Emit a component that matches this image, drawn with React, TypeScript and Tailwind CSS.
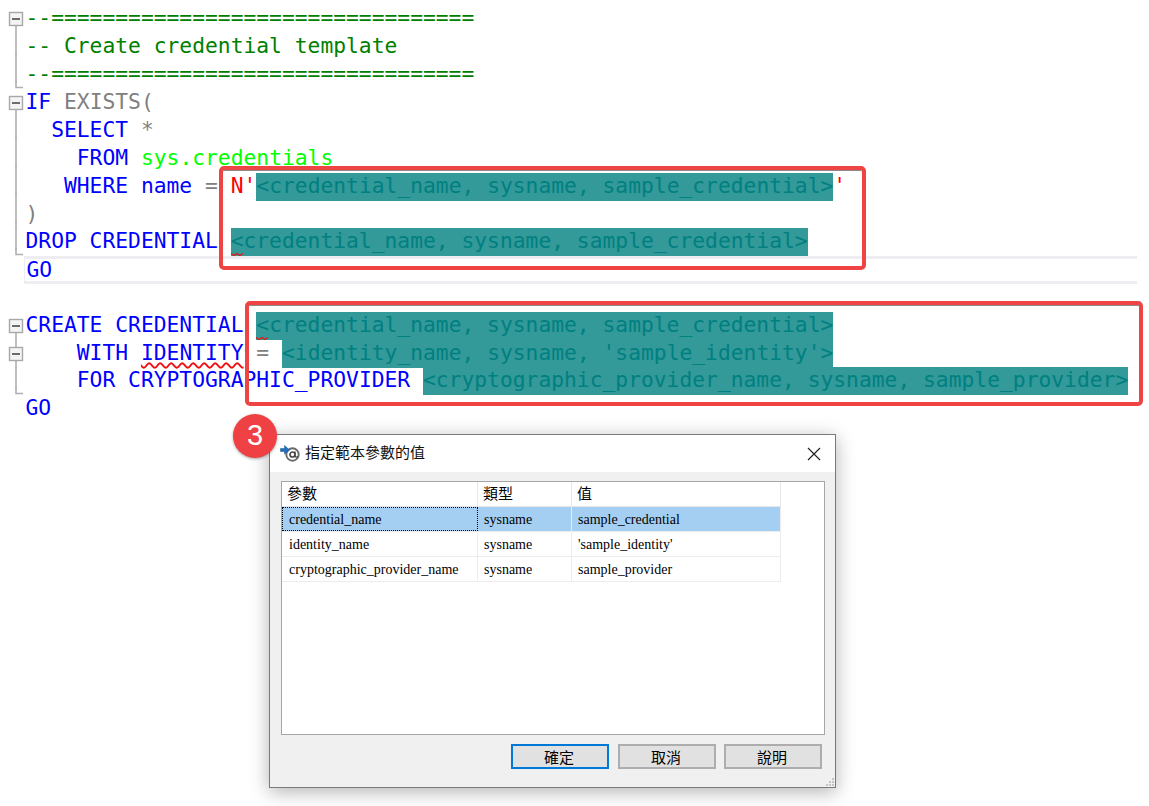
const mono = 'font-["DejaVu_Sans_Mono",monospace]';
const cjk = 'font-["Noto_Sans_CJK_TC",sans-serif]';

type Fold = 'open' | 'nested' | 'line' | 'end' | 'none';

// Gutter with the outlining marks of the editor
function Gutter({ fold }: { fold: Fold }) {
  return (
    <svg width="24" height="28" className="shrink-0 overflow-visible">
      {(fold === 'line' || fold === 'end') && <path d="M16 0V22" stroke="#b0b0b0" strokeWidth="1.6" fill="none" />}
      {fold === 'line' && <path d="M16 20V28" stroke="#b0b0b0" strokeWidth="1.6" fill="none" />}
      {fold === 'end' && <path d="M16 20V26.5H23" stroke="#b0b0b0" strokeWidth="1.6" fill="none" />}
      {fold === 'nested' && <path d="M16 0V7" stroke="#b0b0b0" strokeWidth="1.6" fill="none" />}
      {(fold === 'open' || fold === 'nested') && (
        <>
          <path d="M16 20V28" stroke="#b0b0b0" strokeWidth="1.6" fill="none" />
          <rect x="9.5" y="7.5" width="13" height="13" fill="#f4f4f4" stroke="#a8a8a8" strokeWidth="1.4" />
          <path d="M12 14H20" stroke="#333" strokeWidth="1.4" />
        </>
      )}
    </svg>
  );
}

function Line({ fold, children, current, short }: { fold: Fold; children?: React.ReactNode; current?: boolean; short?: boolean }) {
  return (
    <div className={short ? 'flex h-[27px]' : 'flex h-[28px]'}>
      <Gutter fold={fold} />
      <div
        className={
          current
            ? 'flex-1 pl-[1.5px] border-l-[1px] border-y-[3px] border-[#eeeef2] leading-[21px] whitespace-pre'
            : 'flex-1 pl-[1.5px] leading-[26px] whitespace-pre'
        }
      >
        {children}
      </div>
    </div>
  );
}

const Kw = ({ children }: { children: React.ReactNode }) => <span className="text-[#0000ff]">{children}</span>;
const Gray = ({ children }: { children: React.ReactNode }) => <span className="text-[#808080]">{children}</span>;
const Param = ({ children }: { children: React.ReactNode }) => (
  <span className="inline-block h-[28px] bg-[#339999] text-[#008080] align-top">{children}</span>
);

function Squiggle() {
  return (
    <svg width="12" height="5" className="absolute left-0 bottom-[-1px]">
      <path d="M0 1.5L3 3.5L6 1.5L9 3.5L12 1.5" stroke="#f01010" strokeWidth="1.4" fill="none" />
    </svg>
  );
}

function Editor() {
  return (
    <div className={`${mono} text-[21.3px] pt-[5px] pr-[12px]`}>
      <Line fold="open"><span className="text-[#008000]">--=================================</span></Line>
      <Line fold="line"><span className="text-[#008000]">-- Create credential template</span></Line>
      <Line fold="end"><span className="text-[#008000]">--=================================</span></Line>
      <Line fold="open"><Kw>IF</Kw> <Gray>EXISTS(</Gray></Line>
      <Line fold="line">  <Kw>SELECT</Kw> <Gray>*</Gray></Line>
      <Line fold="line">    <Kw>FROM</Kw> <span className="text-[#00ff00]">sys.credentials</span></Line>
      <Line fold="line">   <Kw>WHERE</Kw> <Kw>name</Kw> <Gray>=</Gray> <span className="text-[#ff0000]">N'</span><Param>{'<credential_name, sysname, sample_credential>'}</Param><span className="text-[#ff0000]">'</span></Line>
      <Line fold="line" short><Gray>)</Gray></Line>
      <Line fold="end"><Kw>DROP CREDENTIAL</Kw> <span className="relative inline-block align-top"><Param>{'<credential_name, sysname, sample_credential>'}</Param><Squiggle /></span></Line>
      <Line fold="none" current><Kw>GO</Kw></Line>
      <Line fold="none" />
      <Line fold="open"><Kw>CREATE CREDENTIAL</Kw> <span className="relative inline-block align-top"><Param>{'<credential_name, sysname, sample_credential>'}</Param><Squiggle /></span></Line>
      <Line fold="nested" short>    <Kw>WITH</Kw> <span className="text-[#0000ff] underline decoration-wavy decoration-[#f01010] decoration-[1.5px] underline-offset-[2px]">IDENTITY</span> <Gray>=</Gray> <Param>{"<identity_name, sysname, 'sample_identity'>"}</Param></Line>
      <Line fold="end">    <Kw>FOR CRYPTOGRAPHIC_PROVIDER</Kw> <Param>{'<cryptographic_provider_name, sysname, sample_provider>'}</Param></Line>
      <Line fold="none"><Kw>GO</Kw></Line>
    </div>
  );
}

const rows = [
  ['credential_name', 'sysname', 'sample_credential'],
  ['identity_name', 'sysname', "'sample_identity'"],
  ['cryptographic_provider_name', 'sysname', 'sample_provider'],
];

function ParamTable() {
  return (
    <div className="flex-1 ml-[11px] mr-[10px] mt-[9px] border border-[#a6a6a6] bg-white">
      <div className={`${cjk} flex w-[499px] h-[25px] text-[15px] leading-[21px] text-black border-b border-[#e6e6e6]`}>
        <div className="w-[196px] pl-[5px] border-r border-[#e6e6e6]">參數</div>
        <div className="w-[94px] pl-[5px] border-r border-[#e6e6e6]">類型</div>
        <div className="flex-1 pl-[5px] border-r border-[#e6e6e6]">值</div>
      </div>
      {rows.map((row, i) => (
        <div
          key={row[0]}
          className={`flex w-[499px] h-[25px] font-["Liberation_Serif",serif] text-[14px] text-black border-b border-[#ececec] ${i === 0 ? 'bg-[#a5cff2]' : ''}`}
        >
          <div
            className={`w-[196px] ${i === 0 ? 'border border-dotted border-black leading-[24px] pl-[6px]' : 'leading-[26px] pl-[7px] border-r border-[#ececec]'}`}
          >
            {row[0]}
          </div>
          <div className="w-[94px] pl-[6px] leading-[26px] border-r border-[#ececec]">{row[1]}</div>
          <div className="flex-1 pl-[6px] leading-[26px] border-r border-[#ececec]">{row[2]}</div>
        </div>
      ))}
    </div>
  );
}

function DialogIcon() {
  return (
    <svg width="20" height="18" viewBox="0 0 20 18" className="shrink-0">
      <circle cx="12.5" cy="9.5" r="6.2" fill="none" stroke="#6a6a6a" strokeWidth="1.9" />
      <circle cx="12.5" cy="9.5" r="2.5" fill="none" stroke="#4a4a4a" strokeWidth="1.7" />
      <path d="M15 6.6V10.8Q15.6 13 18 11.6" fill="none" stroke="#4a4a4a" strokeWidth="1.4" />
      <path d="M0.5 3.5H4.5V0.5L9.5 5L4.5 9V6.5H0.5Z" fill="#1f6fc0" stroke="#174f8c" strokeWidth="0.5" />
    </svg>
  );
}

function Dialog() {
  const btn = `${cjk} w-[98px] h-[25px] bg-[#e1e1e1] text-[15px] leading-[19px] text-black`;
  return (
    <div className="absolute left-[269px] top-[434px] w-[567px] h-[354px] flex flex-col border border-[#7a7a7a] bg-[#f0f0f0] shadow-[0_4px_18px_rgba(0,0,0,0.3)]">
      <div className="flex items-center h-[37px] bg-white pl-[10px] pr-[14px]">
        <DialogIcon />
        <span className={`${cjk} ml-[5px] mb-[2px] text-[15px] text-[#111]`}>指定範本參數的值</span>
        <svg width="14" height="14" viewBox="0 0 14 14" className="ml-auto">
          <path d="M1 1L13 13M13 1L1 13" stroke="#222" strokeWidth="1.2" />
        </svg>
      </div>
      <ParamTable />
      <div className="flex justify-end gap-[8px] h-[52px] pt-[9px] pr-[13px]">
        <button className={`${btn} pr-[2px] border-2 border-[#0078d7]`}>確定</button>
        <button className={`${btn} pr-[2px] border-2 border-[#adadad] ml-[1px]`}>取消</button>
        <button className={`${btn} pr-[2px] border-2 border-[#adadad]`}>說明</button>
      </div>
      <svg width="10" height="10" className="absolute right-0 bottom-0">
        <path d="M7 1h2v2H7zM4 4h2v2H4zM7 4h2v2H7zM1 7h2v2H1zM4 7h2v2H4zM7 7h2v2H7z" fill="#c4c4c4" />
      </svg>
    </div>
  );
}

export default function App() {
  return (
    <div className="relative w-[1149px] h-[806px] overflow-hidden bg-white">
      <Editor />
      <div className="absolute left-[219px] top-[166px] w-[647px] h-[104px] rounded-[5px] border-[4px] border-[#ef4444] shadow-[inset_0_1px_0_#8a8a8a]" />
      <div className="absolute left-[245px] top-[301px] w-[898px] h-[105px] rounded-[5px] border-[4px] border-[#ef4444] shadow-[inset_0_1px_0_#8a8a8a]" />
      <Dialog />
      <div className="absolute left-[233px] top-[414px] w-[44px] h-[44px] rounded-full bg-[#ef4043] flex items-center justify-center text-white text-[29px] font-['Liberation_Sans',sans-serif] shadow-[0_1px_3px_rgba(0,0,0,0.35)]">
        3
      </div>
    </div>
  );
}
